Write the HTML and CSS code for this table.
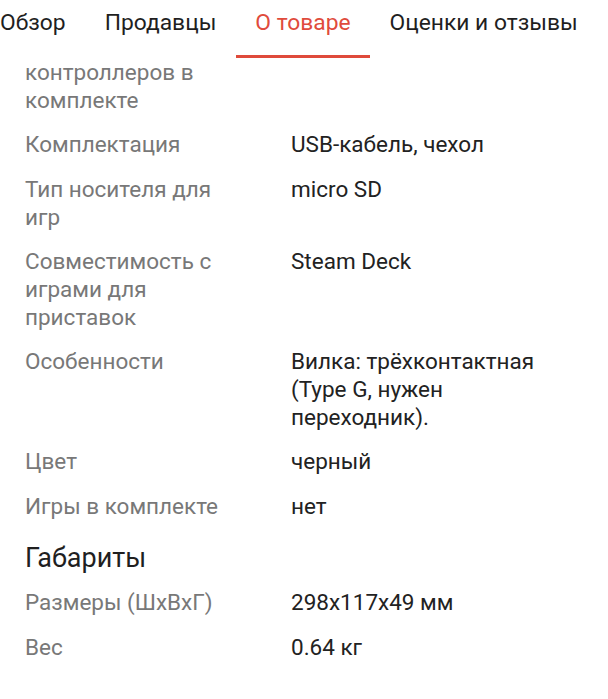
FILE: index.html
```html
<!DOCTYPE html>
<html lang="ru">
<head>
<meta charset="utf-8">
<link rel="stylesheet" href="styles.css">
</head>
<body>
<nav class="tabs">
  <div class="tab">Обзор</div>
  <div class="tab">Продавцы</div>
  <div class="tab active">О товаре</div>
  <div class="tab">Оценки и отзывы</div>
</nav>
<main class="specs">
  <div class="row"><div class="label">контроллеров в комплекте</div><div class="value"></div></div>
  <div class="row"><div class="label">Комплектация</div><div class="value">USB-кабель, чехол</div></div>
  <div class="row"><div class="label">Тип носителя для игр</div><div class="value">micro SD</div></div>
  <div class="row"><div class="label">Совместимость с играми для приставок</div><div class="value">Steam Deck</div></div>
  <div class="row"><div class="label">Особенности</div><div class="value">Вилка: трёхконтактная (Type G, нужен переходник).</div></div>
  <div class="row"><div class="label">Цвет</div><div class="value">черный</div></div>
  <div class="row"><div class="label">Игры в комплекте</div><div class="value">нет</div></div>
  <h2 class="section">Габариты</h2>
  <div class="row"><div class="label">Размеры (ШхВхГ)</div><div class="value">298x117x49 мм</div></div>
  <div class="row"><div class="label">Вес</div><div class="value">0.64 кг</div></div>
</main>
</body>
</html>
```
FILE: styles.css
```css
html, body {
  margin: 0;
  padding: 0;
  background: #ffffff;
  font-family: Roboto, "Noto Sans", sans-serif;
}
body {
  width: 608px;
  overflow: hidden;
}
.tabs {
  display: flex;
  height: 58px;
  margin-left: -19.5px;
  white-space: nowrap;
}
.tab {
  padding: 8px 19.5px 0;
  font-size: 22.8px;
  line-height: 30px;
  color: #1f1f1f;
  box-sizing: border-box;
  height: 58px;
  border-bottom: 3px solid transparent;
}
.tab.active {
  color: #e04b3c;
  border-bottom-color: #df4a3b;
}
.specs {
  display: flex;
  flex-direction: column;
  gap: 16.3px;
  padding: 0 40px 0 25px;
}
.row {
  display: grid;
  grid-template-columns: 266px 1fr;
  font-size: 22.5px;
  line-height: 28px;
}
.label {
  color: #787878;
  padding-right: 40px;
}
.value {
  color: #222222;
}
.section {
  margin: 6px 0 -2px;
  font-size: 27px;
  line-height: 32px;
  font-weight: 400;
  color: #1f1f1f;
}
```
